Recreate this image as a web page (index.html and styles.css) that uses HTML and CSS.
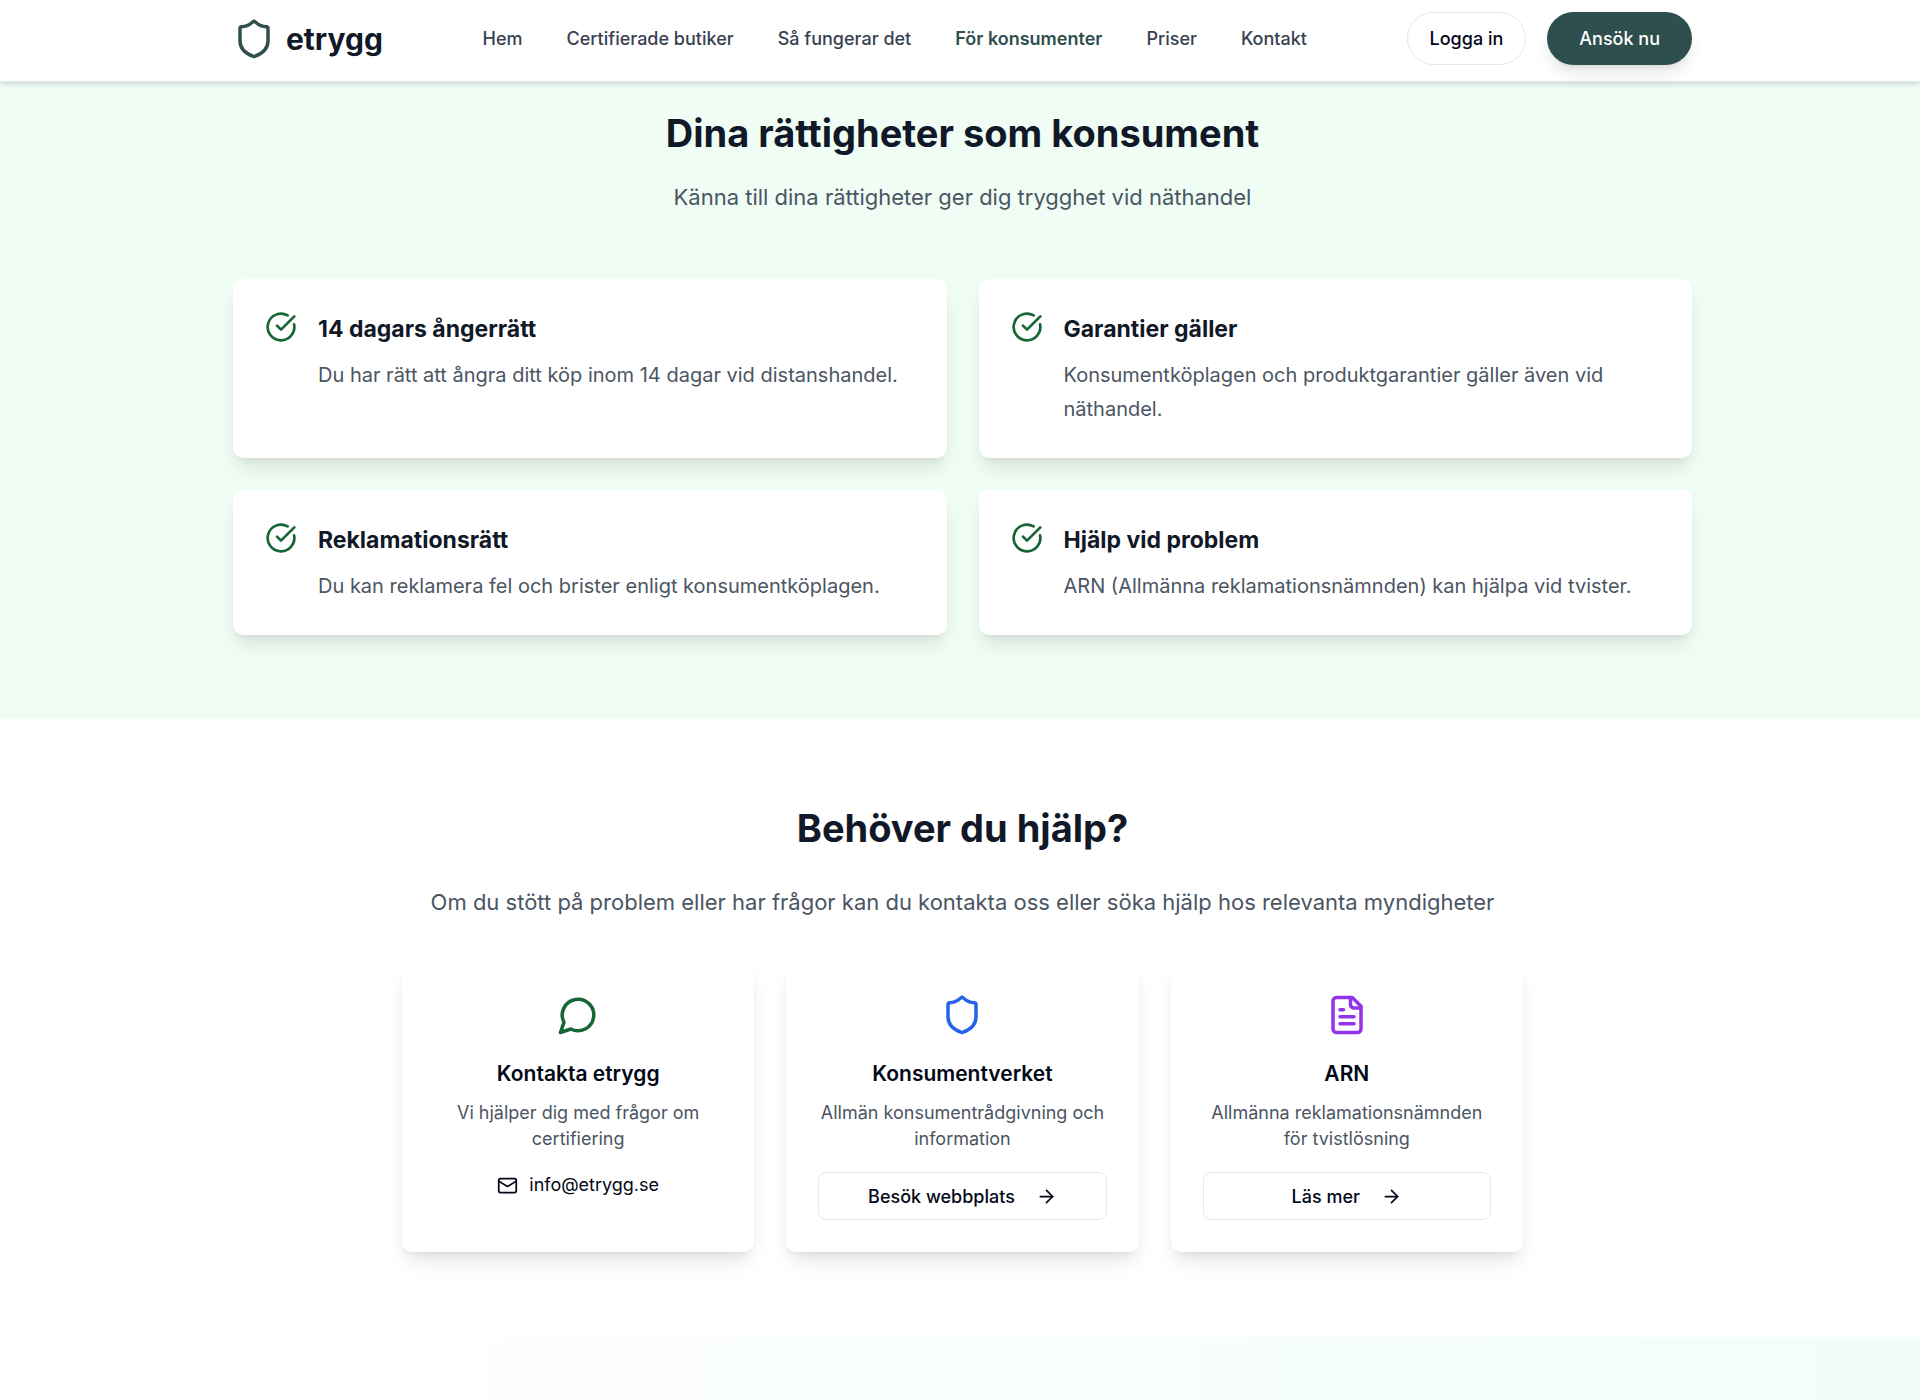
FILE: index.html
```
<!DOCTYPE html>
<html lang="sv">

<head>
    <meta charset="UTF-8">
    <meta name="viewport" content="width=device-width, initial-scale=1.0">
    <title>etrygg - För konsumenter</title>
    <link rel="stylesheet" href="styles.css">
</head>

<body>
    <header class="site-header">
        <div class="container header-row">
            <a class="logo" href="#">
                <svg class="icon icon-lg" viewBox="0 0 24 24"><path d="M20 13c0 5-3.500 7.500-7.660 8.950a1 1 0 0 1-.67-.01C7.500 20.500 4 18 4 13V6a1 1 0 0 1 1-1c2 0 4.500-1.200 6.240-2.720a1.170 1.170 0 0 1 1.520 0C14.510 3.810 17 5 19 5a1 1 0 0 1 1 1z"/></svg>
                <span>etrygg</span>
            </a>
            <nav class="main-nav">
                <a href="#">Hem</a>
                <a href="#">Certifierade butiker</a>
                <a href="#">Så fungerar det</a>
                <a class="active" href="#">För konsumenter</a>
                <a href="#">Priser</a>
                <a href="#">Kontakt</a>
            </nav>
            <div class="header-buttons">
                <button class="btn-login">Logga in</button>
                <button class="btn-apply">Ansök nu</button>
            </div>
        </div>
    </header>

    <main>
        <section class="rights">
            <div class="container">
                <h2>Dina rättigheter som konsument</h2>
                <p class="lead">Känna till dina rättigheter ger dig trygghet vid näthandel</p>
                <div class="rights-grid">
                    <article class="card right-card">
                        <svg class="icon icon-md green" viewBox="0 0 24 24"><path d="M21.801 10A10 10 0 1 1 17 3.335"/><path d="m9 11 3 3L22 4"/></svg>
                        <div>
                            <h3>14 dagars ångerrätt</h3>
                            <p>Du har rätt att ångra ditt köp inom 14 dagar vid distanshandel.</p>
                        </div>
                    </article>
                    <article class="card right-card">
                        <svg class="icon icon-md green" viewBox="0 0 24 24"><path d="M21.801 10A10 10 0 1 1 17 3.335"/><path d="m9 11 3 3L22 4"/></svg>
                        <div>
                            <h3>Garantier gäller</h3>
                            <p>Konsumentköplagen och produktgarantier gäller även vid näthandel.</p>
                        </div>
                    </article>
                    <article class="card right-card">
                        <svg class="icon icon-md green" viewBox="0 0 24 24"><path d="M21.801 10A10 10 0 1 1 17 3.335"/><path d="m9 11 3 3L22 4"/></svg>
                        <div>
                            <h3>Reklamationsrätt</h3>
                            <p>Du kan reklamera fel och brister enligt konsumentköplagen.</p>
                        </div>
                    </article>
                    <article class="card right-card">
                        <svg class="icon icon-md green" viewBox="0 0 24 24"><path d="M21.801 10A10 10 0 1 1 17 3.335"/><path d="m9 11 3 3L22 4"/></svg>
                        <div>
                            <h3>Hjälp vid problem</h3>
                            <p>ARN (Allmänna reklamationsnämnden) kan hjälpa vid tvister.</p>
                        </div>
                    </article>
                </div>
            </div>
        </section>

        <section class="help">
            <div class="container">
                <h2>Behöver du hjälp?</h2>
                <p class="lead">Om du stött på problem eller har frågor kan du kontakta oss eller söka hjälp hos relevanta myndigheter</p>
                <div class="help-grid">
                    <article class="card help-card">
                        <svg class="icon icon-lg green" viewBox="0 0 24 24"><path d="M7.900 20A9 9 0 1 0 4 16.100L2 22Z"/></svg>
                        <h3>Kontakta etrygg</h3>
                        <p>Vi hjälper dig med frågor om certifiering</p>
                        <a class="mail" href="mailto:info@etrygg.se">
                            <svg class="icon icon-sm" viewBox="0 0 24 24"><rect width="20" height="16" x="2" y="4" rx="2"/><path d="m22 7-8.970 5.700a1.940 1.940 0 0 1-2.060 0L2 7"/></svg>
                            info@etrygg.se
                        </a>
                    </article>
                    <article class="card help-card">
                        <svg class="icon icon-lg blue" viewBox="0 0 24 24"><path d="M20 13c0 5-3.500 7.500-7.660 8.950a1 1 0 0 1-.67-.01C7.500 20.500 4 18 4 13V6a1 1 0 0 1 1-1c2 0 4.500-1.200 6.240-2.720a1.170 1.170 0 0 1 1.520 0C14.510 3.810 17 5 19 5a1 1 0 0 1 1 1z"/></svg>
                        <h3>Konsumentverket</h3>
                        <p>Allmän konsumentrådgivning och information</p>
                        <button class="btn-outline">
                            Besök webbplats
                            <svg class="icon icon-sm" viewBox="0 0 24 24"><path d="M5 12h14"/><path d="m12 5 7 7-7 7"/></svg>
                        </button>
                    </article>
                    <article class="card help-card">
                        <svg class="icon icon-lg purple" viewBox="0 0 24 24"><path d="M15 2H6a2 2 0 0 0-2 2v16a2 2 0 0 0 2 2h12a2 2 0 0 0 2-2V7Z"/><path d="M14 2v4a2 2 0 0 0 2 2h4"/><path d="M10 9H8"/><path d="M16 13H8"/><path d="M16 17H8"/></svg>
                        <h3>ARN</h3>
                        <p>Allmänna reklamationsnämnden för tvistlösning</p>
                        <button class="btn-outline">
                            Läs mer
                            <svg class="icon icon-sm" viewBox="0 0 24 24"><path d="M5 12h14"/><path d="m12 5 7 7-7 7"/></svg>
                        </button>
                    </article>
                </div>
            </div>
        </section>

        <section class="next-section"></section>
    </main>
</body>

</html>
```
FILE: styles.css
```
:root {
    --ink: #020817;
    --heading: #111827;
    --muted: #4b5563;
    --line: #e2e8f0;
    --brand: #2f4f4f;
    --green: #166534;
}

* {
    box-sizing: border-box;
}

body {
    margin: 0;
    min-height: 100vh;
    display: flex;
    flex-direction: column;
    background: #fff;
    color: var(--ink);
    font-family: Inter, "Liberation Sans", sans-serif;
    font-size: 18px;
}

main {
    flex: 1;
    display: flex;
    flex-direction: column;
}

h2, h3, p {
    margin: 0;
}

a {
    color: inherit;
    text-decoration: none;
}

button {
    background: #fff;
    border: 1px solid var(--line);
    color: var(--ink);
    font-family: inherit;
    font-size: 18px;
    font-weight: 500;
    cursor: pointer;
}

.container {
    max-width: 1528px;
    margin: 0 auto;
    padding: 0 32px 0 37px;
}

/* icons */
.icon {
    flex-shrink: 0;
    fill: none;
    stroke: currentColor;
    stroke-width: 2;
    stroke-linecap: round;
    stroke-linejoin: round;
}

.icon-sm {
    width: 21px;
    height: 21px;
}

.icon-md {
    width: 32px;
    height: 32px;
}

.icon-lg {
    width: 42px;
    height: 42px;
}

.green {
    color: var(--green);
}

.blue {
    color: #2563eb;
}

.purple {
    color: #9333ea;
}

/* header */
.site-header {
    position: sticky;
    top: 0;
    z-index: 10;
    padding: 12px 0 16px;
    background: #fff;
    border-bottom: 1px solid var(--line);
    box-shadow: 0 4px 6px -1px rgba(0, 0, 0, 0.1), 0 2px 4px -2px rgba(0, 0, 0, 0.1);
}

.header-row {
    display: flex;
    justify-content: space-between;
    align-items: center;
}

.logo {
    display: flex;
    align-items: center;
    gap: 11px;
    color: var(--brand);
}

.logo span {
    color: var(--heading);
    font-size: 30px;
    font-weight: 700;
}

.main-nav {
    display: flex;
    gap: 44px;
    color: #374151;
    font-weight: 500;
}

.main-nav .active {
    color: var(--brand);
    font-weight: 600;
}

.header-buttons {
    display: flex;
    gap: 21px;
}

.btn-login,
.btn-apply {
    height: 53px;
    border-radius: 27px;
}

.btn-login {
    padding: 0 22px;
}

.btn-apply {
    padding: 0 32px;
    border: none;
    background: var(--brand);
    color: #fff;
    box-shadow: 0 11px 16px -3px rgba(0, 0, 0, 0.1), 0 4px 6px -4px rgba(0, 0, 0, 0.1);
}

/* sections */
h2 {
    color: var(--heading);
    font-size: 38px;
    line-height: 48px;
    font-weight: 700;
    text-align: center;
}

.lead {
    color: var(--muted);
    font-size: 22px;
    line-height: 36px;
    text-align: center;
}

.card {
    padding: 32px;
    background: #fff;
    border-radius: 10px;
    box-shadow: 0 13px 20px -4px rgba(0, 0, 0, 0.1), 0 5px 8px -5px rgba(0, 0, 0, 0.1);
}

.rights {
    padding: 27px 0 84px;
    background: #f0fdf4;
}

.rights h2 {
    margin-bottom: 22px;
}

.rights-grid {
    display: grid;
    grid-template-columns: 1fr 1fr;
    gap: 32px;
    margin-top: 64px;
}

.right-card {
    display: flex;
    gap: 21px;
}

.right-card h3 {
    margin-bottom: 11px;
    color: var(--heading);
    font-size: 23px;
    line-height: 36px;
    font-weight: 700;
}

.right-card p {
    color: var(--muted);
    font-size: 20px;
    line-height: 34px;
}

.help {
    padding: 85px 0;
}

.help h2 {
    margin-bottom: 32px;
}

.help-grid {
    display: grid;
    grid-template-columns: repeat(3, 1fr);
    gap: 32px;
    max-width: 1121px;
    margin: 42px auto 0;
}

.help-card {
    display: flex;
    flex-direction: column;
    align-items: center;
    text-align: center;
}

.help-card h3 {
    margin: 22px 0 10px;
    font-size: 21px;
    line-height: 32px;
    font-weight: 600;
}

.help-card p {
    margin-bottom: 20px;
    color: var(--muted);
    line-height: 26px;
}

.mail {
    display: flex;
    align-items: center;
    gap: 11px;
    line-height: 26px;
}

.btn-outline {
    display: flex;
    justify-content: center;
    align-items: center;
    gap: 21px;
    width: 100%;
    height: 48px;
    border-radius: 8px;
}

.next-section {
    flex: 1;
    min-height: 60px;
    background: linear-gradient(to right, #fff 15%, #f0fdf9);
}
```
